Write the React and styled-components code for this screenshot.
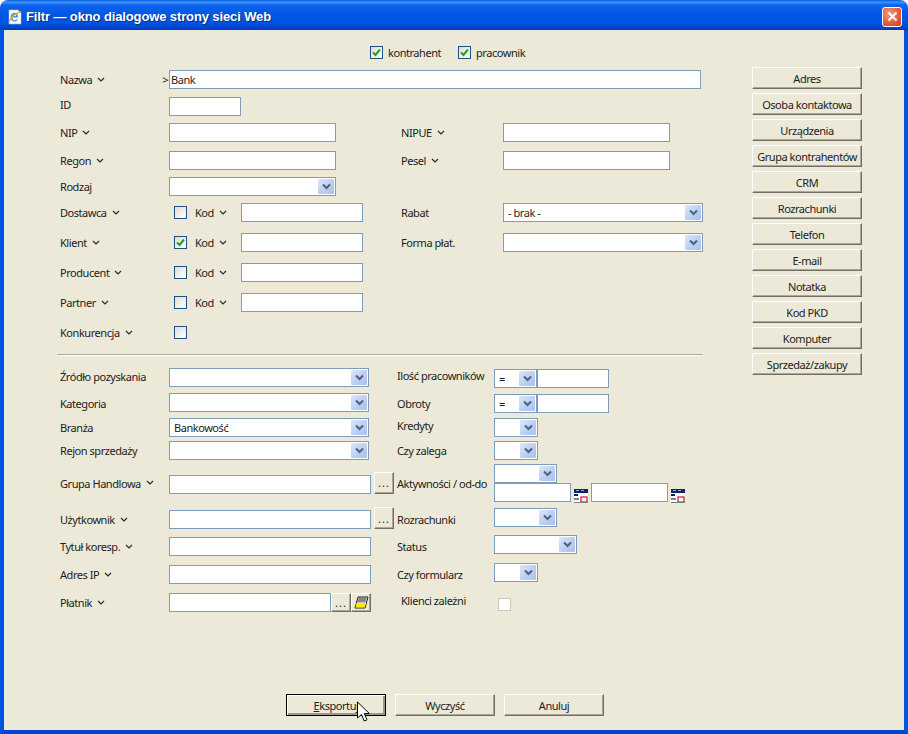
import React from "react";
import styled, { createGlobalStyle } from "styled-components";

const Global = createGlobalStyle`
  html, body { margin: 0; padding: 0; width: 908px; height: 734px; overflow: hidden; background: #fff; }
  * { box-sizing: border-box; }
`;

const Win = styled.div`
  position: relative;
  width: 908px;
  height: 734px;
  display: flex;
  flex-direction: column;
  font-family: "Noto Sans", "Liberation Sans", sans-serif;
  font-size: 11px;
  letter-spacing: -0.45px;
  color: #1c1c1c;
`;
const TitleBar = styled.div`
  height: 30px;
  flex: none;
  display: flex;
  align-items: center;
  gap: 3px;
  padding: 3px 6px 0 7px;
  border-radius: 8px 8px 0 0;
  background: linear-gradient(180deg, #0a5fe0 0%, #3a93ff 8%, #0f64ea 16%, #0058e8 45%, #0055e2 75%, #0046cf 92%, #003bb0 100%);
`;
const Title = styled.div`
  flex: 1;
  color: #fff;
  font-family: "Liberation Sans", sans-serif;
  font-weight: 700;
  font-size: 13px;
  letter-spacing: -0.12px;
  text-shadow: 1px 1px 1px #0a2a80;
`;
const CloseBtn = styled.div`
  width: 20px;
  height: 20px;
  border: 1px solid #fff;
  border-radius: 3px;
  background: radial-gradient(circle at 35% 30%, #f09a80 0%, #e2603f 55%, #c23a1c 100%);
  display: flex;
  align-items: center;
  justify-content: center;
`;
const Body = styled.div`
  flex: 1;
  display: flex;
  flex-direction: column;
  background: #ece9d8;
  border-left: 4px solid #0053e0;
  border-right: 4px solid #0053e0;
  border-bottom: 4px solid #0046d0;
  padding-top: 12px;
`;
const Top = styled.div`
  display: flex;
  gap: 49px;
  padding-left: 56px;
`;
const Form = styled.div`
  width: 643px;
  display: flex;
  flex-direction: column;
`;
const Side = styled.div`
  width: 110px;
  padding-top: 25px;
  display: flex;
  flex-direction: column;
  gap: 4px;
`;
const Flags = styled.div`
  height: 20px;
  padding-left: 310px;
  display: flex;
  align-items: center;
`;
const FlagLabel = styled.span`
  margin-left: 5px;
  width: ${p => p.$w}px;
`;
const Row = styled.div`
  display: grid;
  grid-template-columns: ${p => (p.$lower ? "109px 228px 97px 1fr" : "109px 232px 102px 1fr")};
  align-items: center;
  height: ${p => p.$h || 19}px;
  margin-top: ${p => p.$mt}px;
`;
const Label = styled.div`
  display: flex;
  align-items: center;
  gap: 5px;
  white-space: nowrap;
  padding-left: ${p => p.$pl || 0}px;
  margin-top: ${p => p.$n || 0}px;
  margin-bottom: ${p => -(p.$n || 0)}px;
`;
const NameLabel = styled(Label)`
  justify-content: space-between;
  padding-right: 1px;
`;
const Cell = styled.div`
  display: flex;
  align-items: flex-end;
  padding-left: ${p => p.$pl || 0}px;
  margin-top: ${p => p.$n || 0}px;
  margin-bottom: ${p => -(p.$n || 0)}px;
`;
const WideCell = styled(Cell)`
  grid-column: 2 / -1;
`;
const Stack = styled.div`
  display: flex;
  flex-direction: column;
  align-items: flex-start;
`;
const Input = styled.div`
  width: ${p => p.$w}px;
  height: 19px;
  flex: none;
  background: #fff;
  border: 1px solid #7f9db9;
  padding: 0 1px;
  line-height: 17px;
  overflow: hidden;
`;
const SelectBox = styled.div`
  width: ${p => p.$w}px;
  height: 19px;
  flex: none;
  background: #fff;
  border: 1px solid #7f9db9;
  display: flex;
  align-items: center;
  justify-content: space-between;
  padding: 1px;
`;
const SelectText = styled.span`
  padding-left: 3px;
`;
const Arrow = styled.div`
  width: 16px;
  height: 15px;
  flex: none;
  border-radius: 1px;
  background: linear-gradient(135deg, #dde7fa 0%, #bccff2 55%, #a9c1ee 100%);
  display: flex;
  align-items: center;
  justify-content: center;
`;
const CheckBox = styled.div`
  width: 13px;
  height: 13px;
  flex: none;
  margin-left: ${p => p.$ml || 0}px;
  border: 1px solid ${p => (p.$off ? "#cac8bb" : "#1c5180")};
  background: ${p => (p.$off ? "#fff" : "linear-gradient(135deg, #dcdcd7 0%, #f2f2ee 60%, #ffffff 100%)")};
  display: flex;
  align-items: center;
  justify-content: center;
`;
const KodCell = styled(Cell)`
  align-items: center;
`;
const KodLabel = styled(Label)`
  width: 46px;
  margin-left: 8px;
`;
const Separator = styled.div`
  height: 2px;
  margin: 12px 0 0 -3px;
  background: #aca899;
  border-bottom: 1px solid #fff;
`;
const XpButton = styled.button`
  width: ${p => p.$w}px;
  height: ${p => p.$h}px;
  flex: none;
  padding: 0;
  font: inherit;
  letter-spacing: inherit;
  color: inherit;
  background: #ece9d8;
  border-style: solid;
  border-width: 1px;
  border-color: #fff #716f64 #716f64 #fff;
  box-shadow: inset -1px -1px 0 #aca899;
  display: flex;
  align-items: center;
  justify-content: center;
`;
const DotsButton = styled(XpButton)`
  letter-spacing: 1px;
`;
const BrowseButton = styled(DotsButton)`
  margin: -3px 0 0 3px;
`;
const FocusButton = styled(XpButton)`
  border: 1px solid #000;
  box-shadow: inset 1px 1px 0 #fff, inset -2px -2px 0 #9b988a;
`;
const IconGap = styled.span`
  display: flex;
  flex: none;
  margin: 0 3px -1px 3px;
  align-self: flex-end;
`;
const Footer = styled.div`
  margin-top: auto;
  padding: 0 0 14px 282px;
  display: flex;
  gap: 9px;
`;
const Under = styled.span`
  text-decoration: underline;
`;
const Pointer = styled.svg`
  position: absolute;
  left: 356px;
  top: 701px;
`;

const Chev = () => (
  <svg width="8" height="6" viewBox="0 0 8 6">
    <path d="M1 1l3 3 3-3" fill="none" stroke="#2a2a2a" strokeWidth="1.2" />
  </svg>
);
const Down = () => (
  <svg width="9" height="7" viewBox="0 0 9 7">
    <path d="M1 1.5l3.5 3.5L8 1.5" fill="none" stroke="#4d6185" strokeWidth="2" />
  </svg>
);
const Tick = () => (
  <svg width="9" height="9" viewBox="0 0 9 9">
    <path d="M1 4.5l2.5 2.5L8 1.5" fill="none" stroke="#21a121" strokeWidth="2" />
  </svg>
);
const Cal = () => (
  <IconGap>
    <svg width="14" height="14" viewBox="0 0 14 14">
      <rect width="14" height="14" fill="#fff" />
      <rect width="14" height="4" fill="#0a246a" />
      <path d="M2 1.5h3M7 1.5h3" stroke="#9bb" strokeWidth="1" />
      <rect x="0" y="5" width="4" height="2" fill="#0a246a" />
      <rect x="0" y="9" width="5" height="2" fill="#808080" />
      <rect x="7" y="8" width="6" height="5" fill="none" stroke="#d01030" strokeWidth="1.2" />
      <rect x="0" y="13" width="14" height="1" fill="#808080" />
    </svg>
  </IconGap>
);
const Sel = ({ w, children }) => (
  <SelectBox $w={w}>
    <SelectText>{children}</SelectText>
    <Arrow><Down /></Arrow>
  </SelectBox>
);
const Lab = ({ children, chev, pl, n }) => (
  <Label $pl={pl} $n={n}>{children}{chev && <Chev />}</Label>
);
const Kod = ({ checked }) => (
  <KodCell>
    <CheckBox $ml={5}>{checked && <Tick />}</CheckBox>
    <KodLabel>Kod <Chev /></KodLabel>
    <Input $w={122} />
  </KodCell>
);

const sideItems = ["Adres", "Osoba kontaktowa", "Urządzenia", "Grupa kontrahentów", "CRM", "Rozrachunki", "Telefon", "E-mail", "Notatka", "Kod PKD", "Komputer", "Sprzedaż/zakupy"];

export default function App() {
  return (
    <Win>
      <Global />
      <TitleBar>
        <svg width="16" height="16" viewBox="0 0 16 16">
          <path d="M2 1h9l3 3v11H2z" fill="#fff" stroke="#a8b8d0" strokeWidth="0.6" />
          <path d="M4.200 8.600h7c.2-3-1.400-4.800-3.600-4.800-2.300 0-4 1.800-4 4.400 0 2.600 1.700 4.300 4 4.300 1.600 0 2.800-.7 3.500-2H8.900c-.3.500-.8.800-1.400.800-1 0-1.700-.8-1.800-1.700zM5.800 7.100c.2-1 .9-1.600 1.800-1.600s1.500.6 1.600 1.600z" fill="#3d9be8" fillRule="evenodd" />
          <path d="M14 2.500C11 2.800 4.500 7.500 1.800 13" fill="none" stroke="#e0a81c" strokeWidth="1.300" />
        </svg>
        <Title>Filtr — okno dialogowe strony sieci Web</Title>
        <CloseBtn>
          <svg width="13" height="13" viewBox="0 0 13 13">
            <path d="M2.500 2.500l8 8M10.500 2.500l-8 8" stroke="#fff" strokeWidth="2.200" />
          </svg>
        </CloseBtn>
      </TitleBar>
      <Body>
        <Top>
          <Form>
            <Flags>
              <CheckBox><Tick /></CheckBox>
              <FlagLabel $w={70}>kontrahent</FlagLabel>
              <CheckBox><Tick /></CheckBox>
              <FlagLabel>pracownik</FlagLabel>
            </Flags>
            <Row $mt={8}>
              <NameLabel><Label>Nazwa <Chev /></Label><span>&gt;</span></NameLabel>
              <WideCell><Input $w={532}>Bank</Input></WideCell>
            </Row>
            <Row $mt={8}><Lab n={-2}>ID</Lab><Cell><Input $w={72} /></Cell></Row>
            <Row $mt={7}>
              <Lab chev>NIP</Lab><Cell><Input $w={167} /></Cell>
              <Lab chev>NIPUE</Lab><Cell><Input $w={167} /></Cell>
            </Row>
            <Row $mt={9}>
              <Lab chev>Regon</Lab><Cell><Input $w={167} /></Cell>
              <Lab chev>Pesel</Lab><Cell><Input $w={167} /></Cell>
            </Row>
            <Row $mt={7}><Lab>Rodzaj</Lab><Cell><Sel w={167} /></Cell></Row>
            <Row $mt={7}>
              <Lab chev>Dostawca</Lab><Kod />
              <Lab>Rabat</Lab><Cell><Sel w={200}>- brak -</Sel></Cell>
            </Row>
            <Row $mt={11}>
              <Lab chev>Klient</Lab><Kod checked />
              <Lab>Forma płat.</Lab><Cell><Sel w={200} /></Cell>
            </Row>
            <Row $mt={11}><Lab chev>Producent</Lab><Kod /></Row>
            <Row $mt={11}><Lab chev>Partner</Lab><Kod /></Row>
            <Row $mt={11}><Lab chev>Konkurencja</Lab><KodCell><CheckBox $ml={5} /></KodCell></Row>
            <Separator />
            <Row $lower $mt={12}>
              <Lab n={-1}>Źródło pozyskania</Lab><Cell><Sel w={200} /></Cell>
              <Lab n={-2}>Ilość pracowników</Lab>
              <Cell $n={1}><Sel w={43}>=</Sel><Input $w={72} /></Cell>
            </Row>
            <Row $lower $mt={6}>
              <Lab n={1}>Kategoria</Lab><Cell><Sel w={200} /></Cell>
              <Lab n={1}>Obroty</Lab>
              <Cell $n={1}><Sel w={43}>=</Sel><Input $w={72} /></Cell>
            </Row>
            <Row $lower $mt={6}>
              <Lab>Branża</Lab><Cell><Sel w={200}>Bankowość</Sel></Cell>
              <Lab n={-2}>Kredyty</Lab><Cell><Sel w={44} /></Cell>
            </Row>
            <Row $lower $mt={4}>
              <Lab>Rejon sprzedaży</Lab><Cell><Sel w={200} /></Cell>
              <Lab>Czy zalega</Lab><Cell><Sel w={44} /></Cell>
            </Row>
            <Row $lower $h={38} $mt={4}>
              <Lab chev>Grupa Handlowa</Lab>
              <Cell $n={1}>
                <Input $w={202} /><BrowseButton $w={20} $h={22}>...</BrowseButton>
              </Cell>
              <Lab>Aktywności / od-do</Lab>
              <Stack>
                <Sel w={63} />
                <Cell>
                  <Input $w={77} /><Cal /><Input $w={77} /><Cal />
                </Cell>
              </Stack>
            </Row>
            <Row $lower $mt={8}>
              <Lab chev>Użytkownik</Lab>
              <Cell><Input $w={202} /><BrowseButton $w={20} $h={22}>...</BrowseButton></Cell>
              <Lab>Rozrachunki</Lab><Cell $n={-2}><Sel w={63} /></Cell>
            </Row>
            <Row $lower $mt={8}>
              <Lab chev>Tytuł koresp.</Lab><Cell><Input $w={202} /></Cell>
              <Lab>Status</Lab><Cell $n={-2}><Sel w={83} /></Cell>
            </Row>
            <Row $lower $mt={9}>
              <Lab chev>Adres IP</Lab><Cell><Input $w={202} /></Cell>
              <Lab>Czy formularz</Lab><Cell $n={-2}><Sel w={44} /></Cell>
            </Row>
            <Row $lower $mt={9}>
              <Lab chev>Płatnik</Lab>
              <Cell>
                <Input $w={162} />
                <DotsButton $w={20} $h={19}>...</DotsButton>
                <XpButton $w={20} $h={19}>
                  <svg width="15" height="14" viewBox="0 0 15 14">
                    <path d="M4 1h10l-3 11H1z" fill="#c8c8b8" stroke="#222" strokeWidth="1" />
                    <path d="M4.500 3h7.500M4 5h7.500" stroke="#444" strokeWidth="1" />
                    <path d="M2.500 7h9.500l-1.300 4.500H1.500z" fill="#ffea00" />
                  </svg>
                </XpButton>
              </Cell>
              <Lab pl={4} n={-2}>Klienci zależni</Lab>
              <KodCell $pl={4} $n={2}><CheckBox $off /></KodCell>
            </Row>
          </Form>
          <Side>
            {sideItems.map(t => <XpButton key={t} $h={22}>{t}</XpButton>)}
          </Side>
        </Top>
        <Footer>
          <FocusButton $w={100} $h={22}><Under>E</Under>ksportuj</FocusButton>
          <XpButton $w={100} $h={22}>Wyczyść</XpButton>
          <XpButton $w={100} $h={22}>Anuluj</XpButton>
        </Footer>
      </Body>
      <Pointer width="16" height="22" viewBox="0 0 16 22">
        <path d="M1.500 1v16l4-3.500 2.700 6.500 2.800-1.200-2.700-6.300h5z" fill="#fff" stroke="#000" strokeWidth="1" />
      </Pointer>
    </Win>
  );
}
